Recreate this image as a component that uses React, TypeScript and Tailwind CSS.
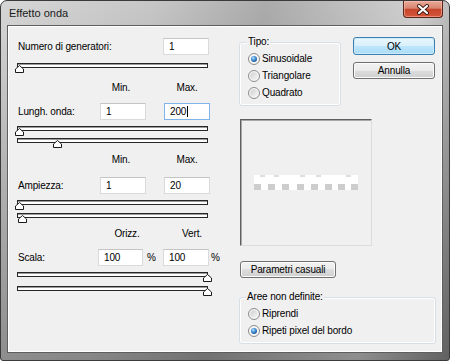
import React from 'react'

function Field({ value, w = 'w-[46px]', focused = false }: { value: string; w?: string; focused?: boolean }) {
  return (
    <div
      className={`flex h-[17px] ${w} items-center border bg-white pl-[5px] leading-[15px] ${
        focused ? 'border-[#7eb4ea]' : 'border-[#dadada] border-t-[#c4c4c4]'
      }`}
    >
      {value}
      {focused && <span className="ml-[1px] inline-block h-[11px] w-px bg-black" />}
    </div>
  )
}

function Slider({ pos }: { pos: number }) {
  return (
    <div className="relative h-[5px] w-[191px] border border-[#262626] bg-white shadow-[inset_0_1px_0_#9a9a9a]">
      <svg className="absolute top-[1px]" style={{ left: pos }} width="9" height="8" viewBox="0 0 9 8">
        <path d="M0.5 7.5V4L4.5 0.5L8.5 4V7.5Z" fill="#fff" stroke="#1a1a1a" />
      </svg>
    </div>
  )
}

function Radio({ on }: { on?: boolean }) {
  return (
    <svg width="12" height="12" viewBox="0 0 12 12" className="shrink-0">
      <defs>
        <radialGradient id="rOn" cx="0.4" cy="0.35" r="0.7">
          <stop offset="0" stopColor="#bfe4fb" />
          <stop offset="0.5" stopColor="#3f8ed3" />
          <stop offset="1" stopColor="#1b4f8c" />
        </radialGradient>
        <linearGradient id="rOff" x1="0" y1="0" x2="1" y2="1">
          <stop offset="0" stopColor="#cfcfcf" />
          <stop offset="1" stopColor="#f7f7f7" />
        </linearGradient>
      </defs>
      <circle cx="6" cy="6" r="5.5" fill="#f6f6f6" stroke="#8c8c8c" />
      <circle cx="6" cy="6" r={on ? 3 : 3.8} fill={on ? 'url(#rOn)' : 'url(#rOff)'} />
    </svg>
  )
}

function Btn({ children, primary = false, className = '' }: { children: React.ReactNode; primary?: boolean; className?: string }) {
  return (
    <div
      className={`flex items-center justify-center rounded-[3px] border ${
        primary
          ? 'border-[#3c7fb1] bg-[linear-gradient(#eaf6fd_0%,#d9f0fc_50%,#bee6fd_50%,#a9dbf6_100%)] shadow-[inset_0_0_0_1px_#cdeafb]'
          : 'border-[#707070] bg-[linear-gradient(#f2f2f2_0%,#ebebeb_50%,#dddddd_50%,#cfcfcf_100%)] shadow-[inset_0_0_0_1px_#fbfbfb]'
      } ${className}`}
    >
      {children}
    </div>
  )
}

function Header({ a, b, lead, gap }: { a: string; b: string; lead: string; gap: string }) {
  return (
    <div className="flex h-[14px] items-center">
      <span className={lead} />
      <span className="w-[46px] text-center">{a}</span>
      <span className={gap} />
      <span className="w-[46px] text-center">{b}</span>
    </div>
  )
}

// preview strip: white band, checker bits along the edges
function Wave() {
  const bottom = [0, 14, 28, 43, 57, 71, 84, 97]
  const top = [6, 20, 46, 62, 92]
  return (
    <svg width="104" height="15" viewBox="0 0 104 15">
      <rect x="0" y="0" width="104" height="15" fill="#fff" />
      {top.map(x => (
        <rect key={'t' + x} x={x} y="0" width="5" height="2" fill="#dedede" />
      ))}
      {bottom.map(x => (
        <rect key={'b' + x} x={x} y="9" width="7" height="6" fill="#cdcdcd" />
      ))}
    </svg>
  )
}

export default function App() {
  return (
    <div className="flex h-[361px] w-[450px] flex-col overflow-hidden rounded-t-[7px] rounded-b-[3px] border border-[#3a3a3a] bg-[linear-gradient(180deg,rgba(255,255,255,0.1),rgba(0,0,0,0.3)),linear-gradient(100deg,#d2d2d2_0%,#c0c0c0_30%,#a2a2a2_52%,#b6b6b6_66%,#cbcbcb_82%,#8a8a8a_100%)] font-['Liberation_Sans',Arial,sans-serif] text-[10px] tracking-[-0.15px] text-black">
      {/* Title bar */}
      <div className="flex h-[24px] shrink-0">
        <span className="pl-[8px] pt-[5px] text-[11px] leading-[14px] tracking-normal text-[#1a1a1a]">Effetto onda</span>
        <div className="ml-auto mr-[6px] flex h-[17px] w-[40px] items-center justify-center rounded-b-[4px] border border-t-0 border-[#5b2418] bg-[linear-gradient(#e9aa9a_0%,#d98470_45%,#c8452b_52%,#d4563a_100%)] shadow-[inset_0_0_0_1px_rgba(255,200,190,0.5)]">
          <svg width="14" height="11" viewBox="0 0 14 11">
            <path d="M3 2L11 9M11 2L3 9" stroke="#3d1a12" strokeWidth="4" strokeLinecap="round" />
            <path d="M3 2L11 9M11 2L3 9" stroke="#fff" strokeWidth="2.2" strokeLinecap="round" />
          </svg>
        </div>
      </div>

      {/* Client area */}
      <div className="ml-[6px] flex h-[328px] w-[436px] border border-[#5e5e5e] bg-[#f0f0f0] shadow-[inset_0_0_0_1px_#ffffff]">
        {/* Left column */}
        <div className="flex w-[231px] flex-col pl-[9px] pt-[12px]">
          <div className="flex h-[17px] items-center">
            <span className="w-[146px] pl-[1px]">Numero di generatori:</span>
            <Field value="1" />
          </div>
          <div className="mt-[8px]"><Slider pos={-3} /></div>

          <div className="mt-[12px]"><Header a="Min." b="Max." lead="w-[81px]" gap="w-[20px]" /></div>
          <div className="mt-[9px] flex h-[17px] items-center">
            <span className="w-[83px] pl-[1px]">Lungh. onda:</span>
            <Field value="1" />
            <span className="w-[18px]" />
            <Field value="200" focused />
          </div>
          <div className="mt-[6px]"><Slider pos={-3} /></div>
          <div className="mt-[7px]"><Slider pos={35} /></div>

          <div className="mt-[9px]"><Header a="Min." b="Max." lead="w-[81px]" gap="w-[20px]" /></div>
          <div className="mt-[11px] flex h-[17px] items-center">
            <span className="w-[83px] pl-[1px]">Ampiezza:</span>
            <Field value="1" />
            <span className="w-[18px]" />
            <Field value="20" />
          </div>
          <div className="mt-[6px]"><Slider pos={-3} /></div>
          <div className="mt-[8px]"><Slider pos={0} /></div>

          <div className="mt-[8px]"><Header a="Orizz." b="Vert." lead="w-[87px]" gap="w-[19px]" /></div>
          <div className="mt-[9px] flex h-[17px] items-center">
            <span className="w-[81px] pl-[1px]">Scala:</span>
            <Field value="100" w="w-[45px]" />
            <span className="w-[20px] pl-[4px]">%</span>
            <Field value="100" />
            <span className="pl-[2px]">%</span>
          </div>
          <div className="mt-[6px]"><Slider pos={185} /></div>
          <div className="mt-[9px]"><Slider pos={185} /></div>
        </div>

        {/* Right column */}
        <div className="flex flex-col pt-[11px]">
          <div className="flex items-start">
            <div className="relative mt-[5px] h-[64px] w-[102px] rounded-[3px] border border-[#d5dfe5] shadow-[inset_0_0_0_1px_#ffffff]">
              <span className="absolute left-[7px] top-[-7px] bg-[#f0f0f0] px-[1px] leading-[12px]">Tipo:</span>
              <div className="flex flex-col pl-[8px] pt-[7px]">
                <div className="flex h-[17px] items-center gap-[2px]"><Radio on />Sinusoidale</div>
                <div className="flex h-[17px] items-center gap-[2px]"><Radio />Triangolare</div>
                <div className="flex h-[17px] items-center gap-[2px]"><Radio />Quadrato</div>
              </div>
            </div>
            <div className="ml-[12px] flex flex-col">
              <Btn primary className="h-[18px] w-[82px]">OK</Btn>
              <Btn className="mt-[7px] h-[17px] w-[82px]">Annulla</Btn>
            </div>
          </div>

          <div className="ml-[1px] mt-[13px] flex h-[127px] w-[132px] items-center justify-center border border-b-[#dcdcdc] border-l-[#5f5f5f] border-r-[#dcdcdc] border-t-[#5f5f5f] shadow-[inset_1px_1px_0_#a8a8a8]">
            <Wave />
          </div>

          <Btn className="ml-[1px] mt-[15px] h-[17px] w-[96px]">Parametri casuali</Btn>

          <div className="relative mt-[19px] h-[47px] w-[197px] rounded-[3px] border border-[#d5dfe5] shadow-[inset_0_0_0_1px_#ffffff]">
            <span className="absolute left-[6px] top-[-7px] bg-[#f0f0f0] px-[1px] leading-[12px]">Aree non definite:</span>
            <div className="flex flex-col pl-[8px] pt-[7px]">
              <div className="flex h-[17px] items-center gap-[2px]"><Radio />Riprendi</div>
              <div className="flex h-[17px] items-center gap-[2px]"><Radio on />Ripeti pixel del bordo</div>
            </div>
          </div>
        </div>
      </div>
    </div>
  )
}
